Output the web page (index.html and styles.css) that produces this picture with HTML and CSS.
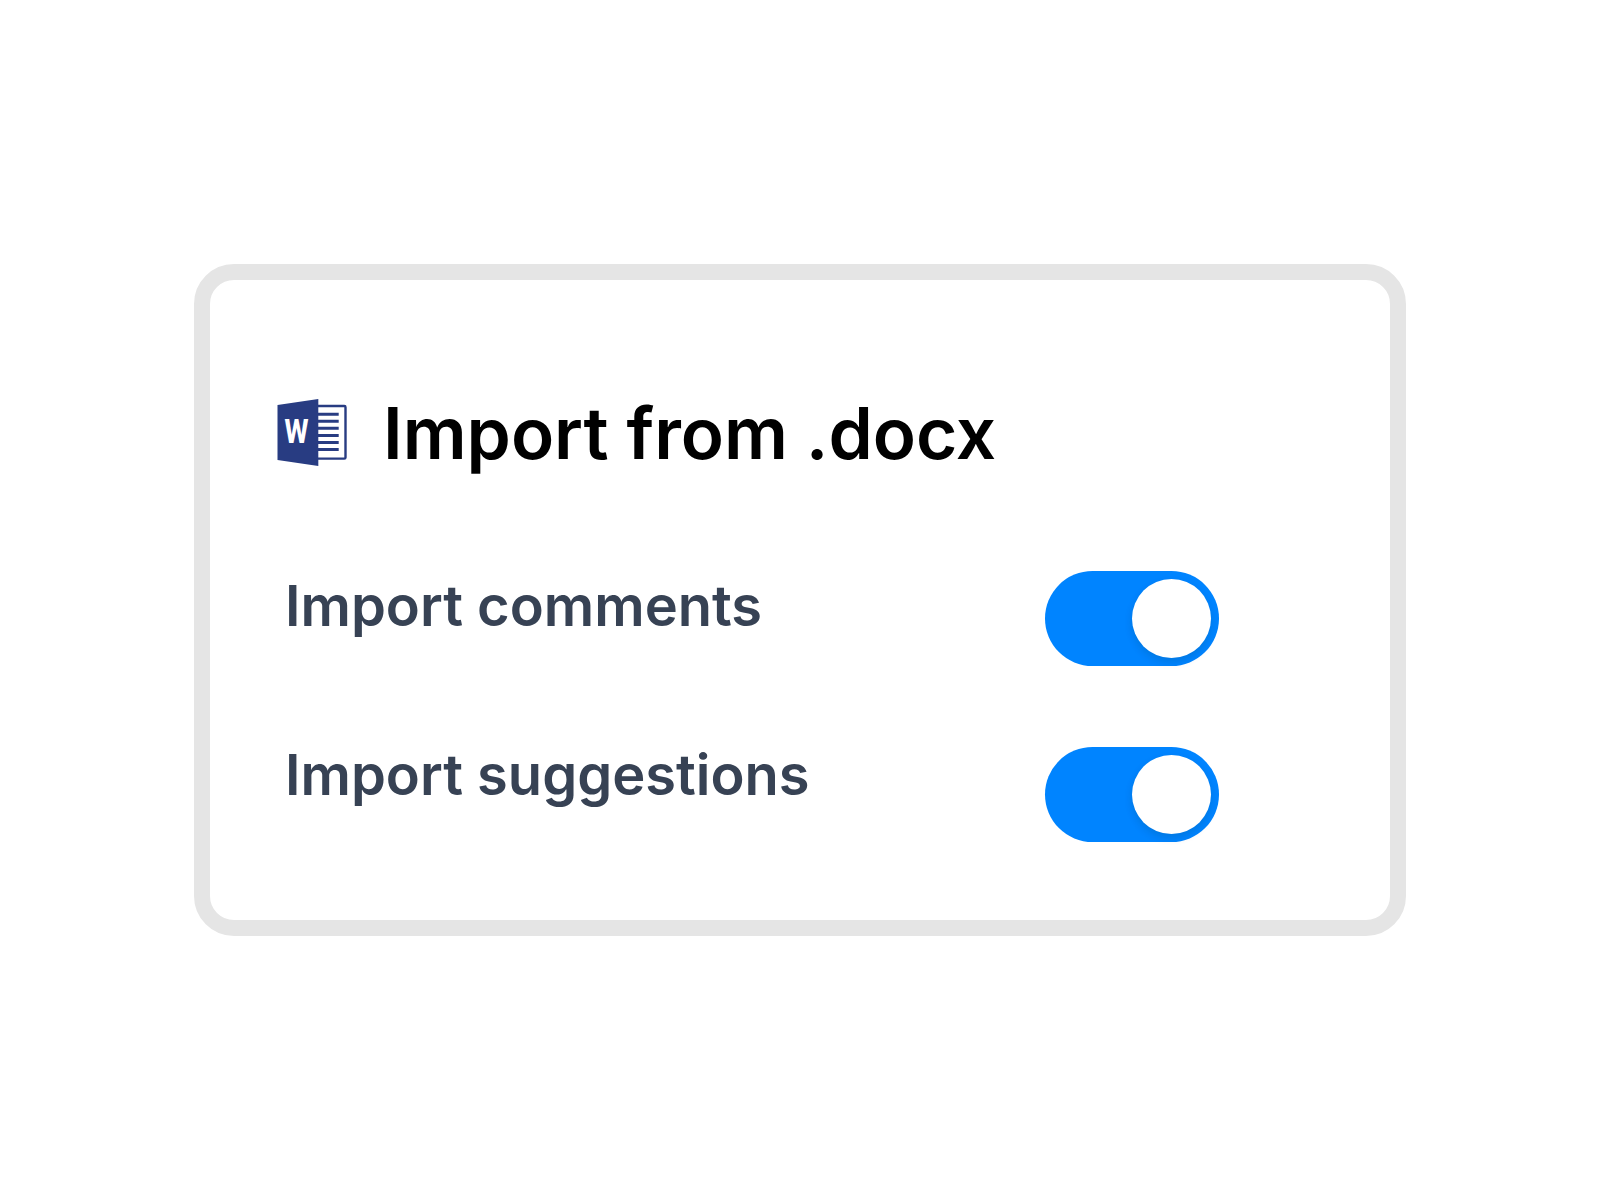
FILE: index.html
```html
<!DOCTYPE html>
<html lang="en">
<head>
  <meta charset="utf-8">
  <meta name="viewport" content="width=device-width, initial-scale=1">
  <title>Import from .docx</title>
  <link rel="stylesheet" href="styles.css">
</head>
<body>
  <main class="card">
    <header class="card-header">
      <svg class="word-icon" viewBox="0 0 70 68" aria-hidden="true">
        <path d="M40 7H67.300Q68.500 7 68.500 8.200V58.400Q68.500 59.600 67.300 59.600H40" fill="#fff" stroke="#283c82" stroke-width="2.400"/>
        <path d="M41 15.300H61.700M41 22.300H61.700M41 29.300H61.700M41 36.400H61.700M41 43.400H61.700M41 50.500H61.700" stroke="#283c82" stroke-width="3"/>
        <path d="M0.500 6 41.300 0V67L0.500 61Z" fill="#283c82"/>
        <text class="word-letter" x="19.500" y="44" text-anchor="middle">W</text>
      </svg>
      <h1 class="card-title">Import from .docx</h1>
    </header>
    <form class="options">
      <div class="option-labels">
        <label class="option-label" for="comments">Import comments</label>
        <label class="option-label" for="suggestions">Import suggestions</label>
      </div>
      <div class="option-switches">
        <input class="switch" type="checkbox" role="switch" id="comments" checked>
        <input class="switch" type="checkbox" role="switch" id="suggestions" checked>
      </div>
    </form>
  </main>
</body>
</html>
```
FILE: styles.css
```css
* {
  box-sizing: border-box;
}

body {
  display: flex;
  align-items: center;
  justify-content: center;
  min-height: 100vh;
  margin: 0;
  padding: 24px;
  background: #fff;
  font-family: Inter, "Liberation Sans", sans-serif;
  font-weight: 600;
}

.card {
  width: 100%;
  max-width: 1212px;
  padding: 109px 171px 78px 67px;
  border: 16px solid #e5e5e5;
  border-radius: 40px;
}

.card-header {
  display: flex;
  align-items: center;
  gap: 36px;
  margin-bottom: 94px;
}

.word-icon {
  flex: none;
  width: 70px;
  height: 68px;
}

.word-letter {
  fill: #fff;
  font-family: "Liberation Sans Narrow", "Roboto Condensed", "Open Sans Condensed", Roboto, sans-serif;
  font-size: 33px;
  font-weight: 600;
}

.card-title {
  margin: 0;
  color: #000;
  font-size: 71px;
  font-weight: 600;
  line-height: 88px;
}

.options {
  display: flex;
  justify-content: space-between;
  gap: 32px;
  padding-left: 8px;
}

.option-labels,
.option-switches {
  display: flex;
  flex-direction: column;
}

.option-labels {
  gap: 99px;
}

.option-switches {
  flex: none;
  gap: 81px;
}

.option-label {
  color: #374254;
  font-size: 56px;
  line-height: 70px;
}

.switch {
  display: flex;
  width: 174px;
  height: 95px;
  margin: 0;
  padding: 8px;
  border-radius: 48px;
  background: #ccd0d6;
  appearance: none;
  cursor: pointer;
}

.switch::before {
  content: "";
  width: 79px;
  height: 79px;
  border-radius: 50%;
  background: #fff;
  box-shadow: 0 4px 8px rgba(0, 35, 11, 0.12);
}

.switch:checked {
  justify-content: flex-end;
  background: #0084ff;
}
```
